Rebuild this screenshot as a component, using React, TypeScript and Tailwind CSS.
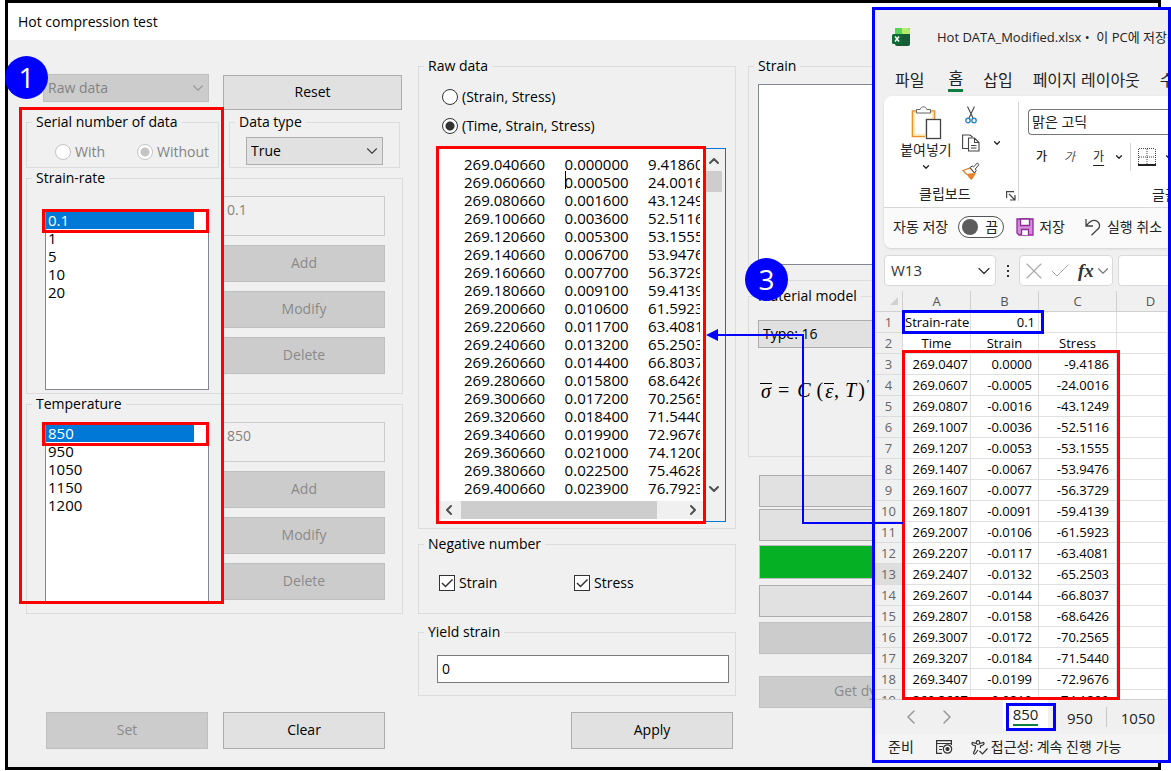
import type { ReactNode } from 'react'
import { ChevronDown, ChevronLeft, ChevronRight, ChevronUp, X, Check } from 'lucide-react'

const strainRates = ['0.1', '1', '5', '10', '20']
const temperatures = ['850', '950', '1050', '1150', '1200']

const rawRows = [
  ['269.040660', '0.000000', '9.418600'],
  ['269.060660', '0.000500', '24.001600'],
  ['269.080660', '0.001600', '43.124900'],
  ['269.100660', '0.003600', '52.511600'],
  ['269.120660', '0.005300', '53.155500'],
  ['269.140660', '0.006700', '53.947600'],
  ['269.160660', '0.007700', '56.372900'],
  ['269.180660', '0.009100', '59.413900'],
  ['269.200660', '0.010600', '61.592300'],
  ['269.220660', '0.011700', '63.408100'],
  ['269.240660', '0.013200', '65.250300'],
  ['269.260660', '0.014400', '66.803700'],
  ['269.280660', '0.015800', '68.642600'],
  ['269.300660', '0.017200', '70.256500'],
  ['269.320660', '0.018400', '71.544000'],
  ['269.340660', '0.019900', '72.967600'],
  ['269.360660', '0.021000', '74.120000'],
  ['269.380660', '0.022500', '75.462800'],
  ['269.400660', '0.023900', '76.792300'],
]
const rawText = rawRows.map((r) => r.join('     ')).join('\n')

const sheetRows = [
  ['269.0407', '0.0000', '-9.4186'],
  ['269.0607', '-0.0005', '-24.0016'],
  ['269.0807', '-0.0016', '-43.1249'],
  ['269.1007', '-0.0036', '-52.5116'],
  ['269.1207', '-0.0053', '-53.1555'],
  ['269.1407', '-0.0067', '-53.9476'],
  ['269.1607', '-0.0077', '-56.3729'],
  ['269.1807', '-0.0091', '-59.4139'],
  ['269.2007', '-0.0106', '-61.5923'],
  ['269.2207', '-0.0117', '-63.4081'],
  ['269.2407', '-0.0132', '-65.2503'],
  ['269.2607', '-0.0144', '-66.8037'],
  ['269.2807', '-0.0158', '-68.6426'],
  ['269.3007', '-0.0172', '-70.2565'],
  ['269.3207', '-0.0184', '-71.5440'],
  ['269.3407', '-0.0199', '-72.9676'],
  ['269.3607', '-0.0210', '-74.1200'],
]

function Group({ title, className = '', children }: { title: string; className?: string; children?: ReactNode }) {
  return (
    <fieldset className={`min-w-0 border border-[#dcdcdc] ${className}`}>
      <legend className="ml-[5px] px-1 leading-5">{title}</legend>
      {children}
    </fieldset>
  )
}

function Button({ children, disabled, className = '' }: { children?: ReactNode; disabled?: boolean; className?: string }) {
  return (
    <button
      type="button"
      disabled={disabled}
      className={`border border-[#adadad] bg-[#e1e1e1] pb-0.5 text-black disabled:border-[#bfbfbf] disabled:bg-[#cccccc] disabled:text-[#8a8a8a] ${className}`}
    >
      {children}
    </button>
  )
}

function Combo({ label, value, disabled, className = '' }: { label: string; value: string; disabled?: boolean; className?: string }) {
  return (
    <div className={`relative ${className}`}>
      <select
        aria-label={label}
        disabled={disabled}
        className="size-full appearance-none border border-[#adadad] bg-[#e1e1e1] pl-1 text-black opacity-100 disabled:border-[#bfbfbf] disabled:bg-[#cccccc] disabled:text-[#838383]"
      >
        <option>{value}</option>
      </select>
      <ChevronDown
        className={`pointer-events-none absolute top-1/2 right-0.5 size-[18px] -translate-y-1/2 ${disabled ? 'text-[#9a9a9a]' : 'text-[#444]'}`}
        strokeWidth={1.5}
      />
    </div>
  )
}

function Radio({ name, label, checked, disabled }: { name: string; label: string; checked?: boolean; disabled?: boolean }) {
  return (
    <label className={`flex h-5 items-center gap-1 ${disabled ? 'text-[#838383]' : ''}`}>
      <input
        type="radio"
        name={name}
        defaultChecked={checked}
        disabled={disabled}
        className="size-4 appearance-none rounded-full border border-[#333] bg-white checked:bg-[radial-gradient(circle,#333_0_4px,transparent_5px)] disabled:border-[#c4c4c4] disabled:checked:bg-[radial-gradient(circle,#c4c4c4_0_4px,transparent_5px)]"
      />
      {label}
    </label>
  )
}

function Checkbox({ label }: { label: string }) {
  return (
    <label className="flex h-5 items-center gap-1">
      <span className="relative size-4">
        <input type="checkbox" defaultChecked className="block size-4 appearance-none border border-[#333] bg-white" />
        <svg viewBox="0 0 16 16" className="pointer-events-none absolute inset-0" fill="none" stroke="#333" strokeWidth="1.5">
          <path d="M3 8l3.5 3.5L13.5 4.5" />
        </svg>
      </span>
      {label}
    </label>
  )
}

// List box on the left, value field with its three actions on the right
function ListEditor({ label, items, listClass }: { label: string; items: string[]; listClass: string }) {
  return (
    <div className="flex gap-[14px] pr-[17px] pl-[18px]">
      <div className={`relative w-[164px] shrink-0 ${listClass}`}>
        <select
          size={9}
          aria-label={label}
          defaultValue={items[0]}
          className="size-full appearance-none overflow-hidden border border-[#828790] bg-white pr-[14px] text-[15px]"
        >
          {items.map((item) => (
            <option
              key={item}
              value={item}
              className="flex h-[18px] min-h-0 items-center p-0 pl-0.5 text-black checked:bg-[linear-gradient(#0078d7,#0078d7)] checked:[-webkit-text-fill-color:#fff]"
            >
              {item}
            </option>
          ))}
        </select>
        <div className="pointer-events-none absolute -top-px right-0 -left-[3px] h-6 border-[3px] border-[#ff0000]" />
      </div>
      <div className="mt-2 flex min-w-0 flex-1 flex-col gap-[9px]">
        <input
          disabled
          aria-label={`${label} value`}
          defaultValue={items[0]}
          className="h-10 w-full border border-[#cccccc] bg-[#f0f0f0] pb-[14px] pl-[3px] text-[#838383]"
        />
        <Button disabled className="h-[37px]">Add</Button>
        <Button disabled className="h-[37px]">Modify</Button>
        <Button disabled className="h-[37px]">Delete</Button>
      </div>
    </div>
  )
}

function Badge({ children, className }: { children: ReactNode; className: string }) {
  return (
    <div className={`absolute flex size-[43px] items-center justify-center rounded-full bg-[#0000ff] pb-0.5 text-[28px] text-white ${className}`}>
      {children}
    </div>
  )
}

function LeftColumn() {
  return (
    <div className="relative w-[377px] shrink-0 pt-[34px]">
      <div className="flex justify-between pr-px pl-[17px]">
        <Combo label="Data source" value="Raw data" disabled className="h-7 w-[166px]" />
        <Button className="mt-px h-[35px] w-[179px]">Reset</Button>
      </div>
      <div className="mt-0.5 flex gap-[10px] pr-[3px]">
        <Group title="Serial number of data" className="h-14 w-[193px]">
          <div className="mt-[10px] flex justify-between pr-[9px] pl-7">
            <Radio name="serial" label="With" disabled />
            <Radio name="serial" label="Without" checked disabled />
          </div>
        </Group>
        <Group title="Data type" className="h-14 flex-1">
          <Combo label="Data type" value="True" className="mt-[5px] mr-4 ml-4 h-7" />
        </Group>
      </div>
      <Group title="Strain-rate" className="pb-[3px]">
        <ListEditor label="Strain-rate" items={strainRates} listClass="mt-[22px] h-[180px]" />
      </Group>
      <Group title="Temperature" className="pb-[10px]">
        <ListEditor label="Temperature" items={temperatures} listClass="mt-[9px] h-[180px]" />
      </Group>
      <div className="mt-[98px] flex gap-[15px] pl-5">
        <Button disabled className="h-[37px] w-[162px]">Set</Button>
        <Button className="h-[37px] w-[162px]">Clear</Button>
      </div>
      <div className="pointer-events-none absolute top-[67px] -left-[7px] h-[497px] w-[205px] border-[3px] border-[#ff0000]" />
      <Badge className="top-[16px] -left-[21px]">1</Badge>
    </div>
  )
}

function RawDataBox() {
  return (
    <div className="relative mx-[19px] mt-3 mr-[9px] flex h-[374px] border border-[#0078d7] bg-white">
      <div className="flex min-w-0 flex-1 flex-col pb-0.5">
        <div className="flex flex-1 pr-[5px]">
          <textarea
            aria-label="Raw data"
            wrap="off"
            spellCheck={false}
            defaultValue={rawText}
            className="min-w-0 flex-1 resize-none overflow-hidden pt-1.5 pl-[25px] text-[15px] leading-[18px] whitespace-pre outline-none"
          />
        </div>
        <div className="flex h-[18px] items-center justify-between bg-[#f0f0f0] pr-1 pl-0.5 text-[#505050]">
          <ChevronLeft className="size-4" strokeWidth={3} />
          <div className="mr-7 ml-1 h-full flex-1 bg-[#cdcdcd]" />
          <ChevronRight className="size-4" strokeWidth={3} />
        </div>
      </div>
      <div className="flex w-5 flex-col items-center bg-[#f0f0f0] pt-1 pr-[3px] pb-6 text-[#505050]">
        <ChevronUp className="size-4 shrink-0" strokeWidth={3} />
        <div className="mt-0.5 h-[21px] w-full bg-[#cdcdcd]" />
        <ChevronDown className="mt-auto size-4 shrink-0" strokeWidth={3} />
      </div>
      <div className="absolute top-[22px] left-[126px] h-[18px] w-px bg-black" />
      <div className="pointer-events-none absolute -top-[3px] right-[19px] -bottom-[3px] -left-[3px] border-[3px] border-[#ff0000]" />
    </div>
  )
}

function MiddleColumn() {
  return (
    <div className="w-[318px] shrink-0 pt-4">
      <Group title="Raw data" className="pb-1.5">
        <div className="mt-[11px] flex flex-col gap-[9px] pl-[23px]">
          <Radio name="columns" label="(Strain, Stress)" />
          <Radio name="columns" label="(Time, Strain, Stress)" checked />
        </div>
        <RawDataBox />
      </Group>
      <Group title="Negative number" className="mt-[5px] pb-5">
        <div className="mt-[19px] grid grid-cols-[135px_1fr] pl-5">
          <Checkbox label="Strain" />
          <Checkbox label="Stress" />
        </div>
      </Group>
      <Group title="Yield strain" className="mt-2 pb-3">
        <div className="mt-[13px] pr-1.5 pl-[18px]">
          <input
            aria-label="Yield strain"
            defaultValue="0"
            className="block h-7 w-full border border-[#7a7a7a] bg-white pb-0.5 pl-1"
          />
        </div>
      </Group>
      <div className="mt-4 flex justify-end pr-[3px]">
        <Button className="h-[37px] w-[162px]">Apply</Button>
      </div>
    </div>
  )
}

function RightColumn() {
  return (
    <div className="min-w-0 flex-1 pt-4">
      <Group title="Strain" className="pb-[15px]">
        <div className="mt-2 pr-4 pl-[9px]">
          <select size={9} aria-label="Strain" className="block h-[181px] w-full appearance-none border border-[#828790] bg-white" />
        </div>
      </Group>
      <Group title="Material model" className="mt-[5px] pb-[46px]">
        <div className="mt-[14px] pr-4 pl-[9px]">
          <Combo label="Material model" value="Type: 16" className="h-7" />
          <div className="mt-[22px] flex h-10 items-center pl-0.5 font-['Liberation_Serif',serif] text-[20px] leading-5 whitespace-nowrap">
            <i className="border-t border-black px-px leading-[14px]">σ</i>
            <span className="mr-2 ml-1.5">=</span>
            <i>C</i>
            <span className="mr-px ml-1.5">(</span>
            <i className="border-t border-black px-px leading-[14px]">ε</i>
            <span>,</span>
            <i className="mr-0.5 ml-1.5">T</i>
            <span>)</span>
            <sup className="ml-0.5 text-xs">′</sup>
          </div>
        </div>
      </Group>
      <div className="flex flex-col pt-[18px] pr-4 pl-[11px]">
        <Button className="h-8" />
        <Button className="mt-0.5 h-8" />
        <div role="progressbar" aria-valuenow={100} className="mt-1 h-[34px] border border-[#bcbcbc] bg-[#06b025]" />
        <Button className="mt-1.5 h-8" />
        <Button disabled className="mt-[5px] h-8" />
        <Button disabled className="mt-[22px] h-8 pl-[74px] text-left">Get dynamic</Button>
      </div>
    </div>
  )
}

function SheetIcon() {
  return (
    <svg viewBox="0 0 18 18" className="size-[18px] shrink-0">
      <rect x="3" y="0" width="15" height="18" rx="2" fill="#185c37" />
      <path d="M5 0h5v6H3V2a2 2 0 0 1 2-2z" fill="#5bd35b" />
      <path d="M10 0h6a2 2 0 0 1 2 2v4h-8z" fill="#b4ec6c" />
      <rect x="0" y="6" width="10" height="10" rx="1.5" fill="#0f6b36" />
      <path d="M3 8.5l4 5M7 8.5l-4 5" stroke="#fff" strokeWidth="1.5" />
    </svg>
  )
}

function PasteIcon() {
  return (
    <svg viewBox="0 0 31 34" className="h-[34px] w-[31px]" fill="none">
      <path d="M6 5H1.5v25.5H14M20 5h3.5v8" stroke="#e8912d" strokeWidth="1.6" />
      <path d="M3 6.5h19v7h-7V29H3z" fill="#fff" stroke="#fbe3a5" strokeWidth="1.5" />
      <path d="M5.5 7V3.5h3.7c.3-3.500 6.300-3.500 6.600 0h3.700V7z" fill="#fff" stroke="#666" />
      <rect x="15.5" y="13.5" width="14" height="19" fill="#fff" stroke="#444" strokeWidth="1.3" />
    </svg>
  )
}

function CutIcon() {
  return (
    <svg viewBox="0 0 12 18" className="h-[18px] w-3" fill="none">
      <path d="M2.5 .5L8 12M9.5 .5L4 12" stroke="#444" strokeWidth="1.1" />
      <circle cx="3" cy="14.5" r="2.2" stroke="#2e86c9" strokeWidth="1.4" />
      <circle cx="9" cy="14.5" r="2.2" stroke="#2e86c9" strokeWidth="1.4" />
    </svg>
  )
}

function CopyIcon() {
  return (
    <svg viewBox="0 0 18 18" className="size-[18px]" fill="none" stroke="#444" strokeWidth="1.1">
      <path d="M6 14.5H.6V1H8l2.500 2" />
      <path d="M6.5 4h6l4.500 4.500v8.500H6.500zM12.500 4v4.500H17M9 11.500h5.500M9 14h5.500" fill="#fff" />
    </svg>
  )
}

function BrushIcon() {
  return (
    <svg viewBox="0 0 18 18" className="size-[18px]" fill="none">
      <path d="M1 8.5l7-2.500 5 5.500L9.500 17c-1.500-1-2.500-2-3-3.500C5 12.500 2.500 11 1 8.500z" fill="#fff" stroke="#e07b1f" strokeWidth="1.3" />
      <path d="M5.5 12l5-1 2 1-3 5c-1.500-1-3-2.500-4-5z" fill="#e8832a" />
      <path d="M8 5.5l2.300-1.500 1.200 1 3.800-4 1.700 1.500L13.300 7l.9 1.500-1.500 2.500z" fill="#fff" stroke="#444" />
    </svg>
  )
}

function Ribbon() {
  return (
    <div className="ml-[9px] flex flex-col overflow-hidden rounded-l-lg bg-white shadow-sm">
      <div className="flex h-[111px]">
        <div className="my-1.5 flex w-[135px] flex-col border-r border-[#d4d4d4]">
          <div className="flex pt-1">
            <button type="button" className="ml-3 flex w-[60px] flex-col items-center">
              <PasteIcon />
              <span className="text-sm leading-5 whitespace-nowrap">붙여넣기</span>
              <ChevronDown className="mt-0.5 size-[10px]" strokeWidth={3} />
            </button>
            <div className="ml-1.5 flex flex-col gap-[10px]">
              <button type="button" aria-label="잘라내기" className="pl-[3px]"><CutIcon /></button>
              <button type="button" aria-label="복사" className="flex items-center gap-3">
                <CopyIcon />
                <ChevronDown className="size-[10px]" strokeWidth={3} />
              </button>
              <button type="button" aria-label="서식 복사"><BrushIcon /></button>
            </div>
          </div>
          <div className="mt-1.5 flex h-4 items-center justify-between pr-0.5 pl-[35px] text-sm leading-4">
            클립보드
            <svg viewBox="0 0 10 10" className="mt-1 size-[10px]" fill="none" stroke="#444" strokeWidth="1.2">
              <path d="M.6 7V.6H8M3 3l6 6M9 4v5H4" />
            </svg>
          </div>
        </div>
        <div className="flex min-w-0 flex-1 flex-col pt-[13px] pl-[9px]">
          <input
            aria-label="글꼴"
            defaultValue="맑은 고딕"
            className="h-[26px] rounded-l-[4px] border border-r-0 border-[#777] bg-white pb-0.5 pl-[3px] text-sm"
          />
          <div className="mt-2 flex h-7 items-center pl-2 text-[12px] whitespace-nowrap">
            <button type="button" className="font-medium">가</button>
            <button type="button" className="ml-[17px] text-[#555] italic">가</button>
            <button type="button" className="ml-[18px] underline underline-offset-4">가</button>
            <ChevronDown className="ml-2.5 size-[10px] shrink-0" strokeWidth={3} />
            <div className="ml-1.5 h-full w-px shrink-0 bg-[#d4d4d4]" />
            <button type="button" aria-label="테두리" className="ml-[7px] shrink-0">
              <svg viewBox="0 0 18 18" className="size-[18px]" fill="none" stroke="#444">
                <path d="M1 .5h16M1 9h16M.5 1v15M9 1v15M17.5 1v15" strokeDasharray="1 1" />
                <path d="M0 17h18" stroke="#222" strokeWidth="2" />
              </svg>
            </button>
            <ChevronDown className="ml-2 size-[10px] shrink-0" strokeWidth={3} />
          </div>
          <div className="mt-4 pl-[124px] text-sm leading-4 whitespace-nowrap">글꼴</div>
        </div>
      </div>
      <div className="flex h-[41px] items-center border-t border-[#d8d8d8] bg-[#fafafa] pb-0.5 pl-[9px] text-sm whitespace-nowrap">
        <label htmlFor="autosave">자동 저장</label>
        <span className="relative ml-2.5 flex h-[22px] w-[46px] shrink-0 items-center rounded-full border border-[#555] bg-white">
          <input id="autosave" type="checkbox" role="switch" className="ml-[3px] size-4 appearance-none rounded-full bg-[#5c5c5c]" />
          <span className="ml-[7px]">끔</span>
        </span>
        <button type="button" className="ml-3 flex shrink-0 items-center gap-[5px]">
          <svg viewBox="0 0 18 18" className="size-[18px]" fill="none" stroke="#8e2c96" strokeWidth="1.3">
            <path d="M1 1h16v16H3l-2-2z" fill="#d48cdb" />
            <path d="M4.5 1v6.500h9V1zM5.500 17v-5.500h7V17" fill="#fff" />
          </svg>
          저장
        </button>
        <button type="button" className="ml-5 flex shrink-0 items-center gap-[6px]">
          <svg viewBox="0 0 16 18" className="h-[18px] w-4" fill="none" stroke="#444" strokeWidth="1.3">
            <path d="M1 1v7h7M1.500 7.500C5 3 9 1 12.500 3.500c3 2.500 2.500 5.500.5 7.500L6.500 17.300" />
          </svg>
          실행 취소
        </button>
      </div>
    </div>
  )
}

function FormulaBar() {
  return (
    <div className="mt-[7px] ml-[9px] flex h-[31px] text-[#333]">
      <div className="flex w-[112px] shrink-0 items-center justify-between rounded-[4px] border border-[#d9d9d9] bg-white pr-px pl-1.5">
        <input aria-label="이름 상자" defaultValue="W13" className="w-[70px] text-[15px]" />
        <ChevronDown className="size-5 shrink-0" strokeWidth={1.5} />
      </div>
      <div className="flex w-[23px] shrink-0 flex-col items-center justify-center gap-[3px]">
        <span className="size-0.5 bg-[#333]" />
        <span className="size-0.5 bg-[#333]" />
        <span className="size-0.5 bg-[#333]" />
      </div>
      <div className="flex w-[94px] shrink-0 items-center rounded-[4px] border border-[#d9d9d9] bg-white">
        <X className="size-7 shrink-0 text-[#aaa]" strokeWidth={1} />
        <Check className="size-6 shrink-0 text-[#aaa]" strokeWidth={1} />
        <i className="ml-1.5 w-[17px] font-['Liberation_Serif',serif] text-[19px] leading-5 font-bold">fx</i>
        <ChevronDown className="size-[18px] shrink-0 text-[#777]" strokeWidth={1.5} />
      </div>
      <input aria-label="수식" className="ml-[5px] min-w-0 flex-1 rounded-l-[4px] border border-r-0 border-[#d9d9d9] bg-white" />
    </div>
  )
}

const cell = 'border-r border-b border-[#e0e0e0] bg-white'

function Sheet() {
  return (
    <div className="relative mt-[5px] h-[408px]">
      <div className="h-full overflow-hidden">
        <table className="w-full table-fixed border-separate border-spacing-0 text-[13px] leading-5">
          <colgroup>
            <col className="w-[28px]" />
            <col className="w-[68px]" />
            <col className="w-[68px]" />
            <col className="w-[78px]" />
            <col />
          </colgroup>
          <thead>
            <tr className="text-[#555]">
              <th className="h-5 border-r border-b border-[#d0d0d0] p-0">
                <svg viewBox="0 0 8 8" className="mr-1 ml-auto size-2"><path d="M8 0v8H0z" fill="#d0d0d0" /></svg>
              </th>
              <th className="border-r border-b border-[#d0d0d0] p-0 font-normal">A</th>
              <th className="border-r border-b border-[#d0d0d0] p-0 font-normal">B</th>
              <th className="border-r border-b border-[#d0d0d0] p-0 font-normal">C</th>
              <th className="border-b border-[#d0d0d0] p-0 pl-4 font-normal">D</th>
            </tr>
          </thead>
          <tbody className="text-right text-black">
            <tr>
              <th className="border-r border-b border-[#dcdcdc] p-0 text-center font-normal text-[#666]">1</th>
              <td className={`${cell} pl-0.5 text-left whitespace-nowrap`}>Strain-rate</td>
              <td className={`${cell} pr-[3px]`}>0.1</td>
              <td className={cell} />
              <td className={cell} />
            </tr>
            <tr className="text-center">
              <th className="border-r border-b border-[#dcdcdc] p-0 font-normal text-[#666]">2</th>
              <td className={cell}>Time</td>
              <td className={cell}>Strain</td>
              <td className={cell}>Stress</td>
              <td className={cell} />
            </tr>
            {sheetRows.map((row, i) => (
              <tr key={row[0]}>
                <th className={`border-r border-b border-[#dcdcdc] p-0 text-center font-normal text-[#666] ${i === 10 ? 'bg-[#dedede]' : ''}`}>
                  {i + 3}
                </th>
                <td className={`${cell} pr-0.5`}>{row[0]}</td>
                <td className={`${cell} pr-1.5`}>{row[1]}</td>
                <td className={`${cell} pr-[7px]`}>{row[2]}</td>
                <td className={cell} />
              </tr>
            ))}
          </tbody>
        </table>
      </div>
      <div className="pointer-events-none absolute top-[19px] left-[27px] h-6 w-[142px] border-[3px] border-[#0000ff]" />
      <div className="pointer-events-none absolute top-[59px] -bottom-px left-[27px] w-[218px] border-[3px] border-[#ff0000]" />
    </div>
  )
}

function SheetWindow() {
  return (
    <section className="absolute top-[7px] right-0 left-[872px] flex flex-col overflow-hidden border-[3px] border-[#0000ff] bg-[#f0f0f0] text-[#222]">
      <div className="flex h-[54px] shrink-0 items-center pl-[17px] whitespace-nowrap">
        <SheetIcon />
        <span className="ml-[27px] text-[13px]">Hot DATA_Modified.xlsx&nbsp;•&nbsp; 이 PC에 저장됨</span>
      </div>
      <nav className="flex h-8 shrink-0 items-center gap-5 pl-5 text-base leading-6 whitespace-nowrap">
        <button type="button" className="mr-1">파일</button>
        <button type="button" className="border-b-[3px] border-[#107c41] leading-[21px]">홈</button>
        <button type="button">삽입</button>
        <button type="button">페이지 레이아웃</button>
        <button type="button">수식</button>
      </nav>
      <Ribbon />
      <FormulaBar />
      <Sheet />
      <div className="flex h-[35px] shrink-0 items-start border-t border-[#d0d0d0] text-[15px] whitespace-nowrap">
        <div className="flex h-full items-center gap-3 pl-6 text-[#999]">
          <ChevronLeft className="size-6" strokeWidth={1.5} />
          <ChevronRight className="size-6" strokeWidth={1.5} />
        </div>
        <div className="relative ml-11 flex h-[30px] w-[45px] justify-center rounded-b-[4px] bg-white">
          <button type="button" className="h-[26px] border-b-2 border-[#107c41] leading-7">850</button>
          <div className="pointer-events-none absolute top-[3px] left-[3px] h-7 w-[50px] border-[3px] border-[#0000ff]" />
        </div>
        <button type="button" className="ml-[19px] h-9 leading-9">950</button>
        <div className="mt-[7px] ml-[13px] h-5 w-px bg-[#c8c8c8]" />
        <button type="button" className="ml-[14px] h-9 leading-9">1050</button>
      </div>
      <footer className="flex h-[26px] shrink-0 items-center bg-[#f4f4f4] pl-[13px] text-sm whitespace-nowrap">
        준비
        <svg viewBox="0 0 17 14" className="ml-[22px] h-[14px] w-[17px]" fill="none" stroke="#333" strokeWidth="1.2">
          <path d="M6 13.4H.6V.6h14.800V5M.6 3.5h14.800M3 6.500h4M3 9.500h3" />
          <circle cx="11.5" cy="9" r="4.2" />
          <circle cx="11.5" cy="9" r="1.5" fill="#333" />
        </svg>
        <svg viewBox="0 0 17 15" className="mr-[3px] ml-[18px] h-[15px] w-[17px] shrink-0" fill="none" stroke="#333" strokeWidth="1.2">
          <circle cx="7" cy="2.5" r="1.8" />
          <path d="M5 3.500L1.500 2.500C.5 3.500 1 4.500 2 5l2.500 1-.3 3-1.700 4c.3 1.500 1.500 1.200 2 .5L7 10M9 3.500l3.500-1c1 1 .5 2-.5 2.500L9.500 6v2M8.500 11l3 3 5-5.500" />
        </svg>
        접근성: 계속 진행 가능
      </footer>
    </section>
  )
}

export default function App() {
  return (
    <div className="relative overflow-hidden bg-white font-['Open_Sans','Noto_Sans_CJK_KR',sans-serif] text-sm text-black">
      <main className="mr-[10px] ml-[5px] border-[3px] border-black bg-[#f0f0f0]">
        <h1 className="flex h-[37px] items-center bg-white pl-[10px]">Hot compression test</h1>
        <div className="flex pb-[18px] pl-[18px]">
          <LeftColumn />
          <div className="w-[15px] shrink-0" />
          <MiddleColumn />
          <div className="w-3 shrink-0" />
          <RightColumn />
        </div>
      </main>
      <SheetWindow />
      {/* Link from the sheet values to the raw data box */}
      <svg
        viewBox="0 0 197 190"
        className="pointer-events-none absolute top-[334px] left-[706px] h-[190px] w-[197px] overflow-visible"
        fill="none"
      >
        <path d="M10 1h87v188h100" stroke="#0000ff" strokeWidth="2" />
        <path d="M0 1l12-6v12z" fill="#0000ff" />
      </svg>
      <Badge className="top-[258px] left-[745px]">3</Badge>
    </div>
  )
}
